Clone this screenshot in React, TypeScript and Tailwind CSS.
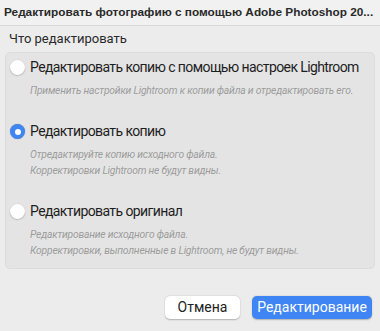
import React from "react";

function Radio({ checked }: { checked?: boolean }) {
  if (checked) {
    return (
      <span className="mt-[1px] flex h-[15px] w-[15px] shrink-0 items-center justify-center rounded-full bg-[#3f85f3] shadow-[0_0_1px_rgba(0,0,0,0.4)]">
        <span className="h-[6px] w-[6px] rounded-full bg-white" />
      </span>
    );
  }
  return (
    <span className="mt-[1px] h-[15px] w-[15px] shrink-0 rounded-full bg-white shadow-[0_0.5px_1.5px_rgba(0,0,0,0.3)]" />
  );
}

function Option({
  checked,
  label,
  lines,
  className,
}: {
  checked?: boolean;
  label: string;
  lines: string[];
  className?: string;
}) {
  return (
    <div className={className}>
      <div className="flex items-center gap-[5px]">
        <Radio checked={checked} />
        <span className="whitespace-nowrap text-[14px] leading-[20px] tracking-[-0.6px] text-[#1e1e1e] [font-family:Roboto,sans-serif]">
          {label}
        </span>
      </div>
      <div className="mt-[6px] pl-[20px] text-[10.3px] italic leading-[16px] tracking-[-0.2px] text-[#9d9d9d] [font-family:Roboto,sans-serif]">
        {lines.map((l) => (
          <div key={l} className="whitespace-nowrap">
            {l}
          </div>
        ))}
      </div>
    </div>
  );
}

export default function App() {
  return (
    <div className="flex h-[331px] w-[380px] flex-col overflow-hidden bg-[#ececec]">
      <div className="flex h-[26px] items-center border-b border-[#d9d9d9] bg-[#f1f1f1] pl-[4px]">
        <span className="whitespace-nowrap text-[11.8px] font-bold text-[#2a2a2a] [font-family:'Liberation_Sans',Arial,sans-serif]">
          Редактировать фотографию с помощью Adobe Photoshop 20...
        </span>
      </div>
      <div className="pl-[9px] pt-[4px] text-[13px] leading-[18px] text-[#2a2a2a] [font-family:Roboto,sans-serif]">
        Что редактировать
      </div>
      <div className="mx-[5px] mt-[4px] h-[217px] rounded-[5px] border border-[#dcdcdc] bg-[#e4e4e4] pl-[4px] pt-[4px]">
        <Option
          label="Редактировать копию с помощью настроек Lightroom"
          lines={["Применить настройки Lightroom к копии файла и отредактировать его."]}
        />
        <Option
          className="mt-[22px]"
          checked
          label="Редактировать копию"
          lines={[
            "Отредактируйте копию исходного файла.",
            "Корректировки Lightroom не будут видны.",
          ]}
        />
        <Option
          className="mt-[22px]"
          label="Редактировать оригинал"
          lines={[
            "Редактирование исходного файла.",
            "Корректировки, выполненные в Lightroom, не будут видны.",
          ]}
        />
      </div>
      <div className="mt-[27px] flex justify-end gap-[12px] pr-[8px]">
        <button className="h-[23px] w-[75px] rounded-[5px] bg-white text-[14px] text-[#222] shadow-[0_0.5px_1.5px_rgba(0,0,0,0.25)] [font-family:Roboto,sans-serif]">
          Отмена
        </button>
        <button className="h-[23px] w-[120px] rounded-[5px] bg-[#3f85f3] text-[14px] text-white shadow-[0_0.5px_1.5px_rgba(0,0,0,0.25)] [font-family:Roboto,sans-serif]">
          Редактирование
        </button>
      </div>
    </div>
  );
}
